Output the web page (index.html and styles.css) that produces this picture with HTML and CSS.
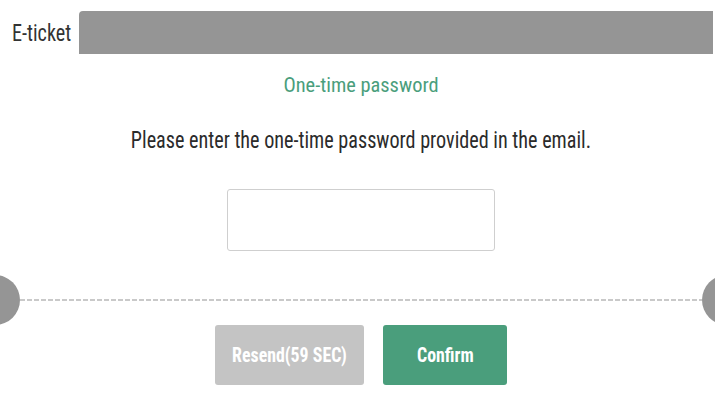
FILE: index.html
```html
<!DOCTYPE html>
<html lang="en">
<head>
<meta charset="utf-8">
<title>E-ticket</title>
<link rel="stylesheet" href="styles.css">
</head>
<body>
<div class="page">
  <div class="tabbar">
    <div class="tab"><span class="narrow narrow-left">E-ticket</span></div>
    <div class="tab-rest"></div>
  </div>
  <div class="content">
    <h1 class="title">One-time password</h1>
    <p class="lead"><span class="narrow">Please enter the one-time password provided in the email.</span></p>
    <div class="field-row">
      <input class="otp" type="text" aria-label="One-time password">
    </div>
  </div>
  <div class="divider">
    <span class="notch notch-left"></span>
    <span class="dash"></span>
    <span class="notch notch-right"></span>
  </div>
  <div class="actions">
    <button class="btn btn-resend" type="button"><span class="narrow">Resend(59 SEC)</span></button>
    <button class="btn btn-confirm" type="button"><span class="narrow">Confirm</span></button>
  </div>
</div>
</body>
</html>
```

FILE: styles.css
```css
* { box-sizing: border-box; }

html, body {
  margin: 0;
  padding: 0;
  background: #fff;
}

body {
  font-family: "Roboto Condensed", Roboto, "Liberation Sans", sans-serif;
  color: #333;
  overflow: hidden;
}

/* tall, tightly set labels */
.narrow {
  display: inline-block;
  white-space: nowrap;
  transform: scaleX(0.84);
  transform-origin: center;
}

.narrow-left { transform-origin: left center; }

.page {
  width: 715px;
  height: 402px;
  padding-top: 11px;
  display: flex;
  flex-direction: column;
  overflow: hidden;
}

.tabbar {
  display: flex;
  height: 43px;
  padding-right: 2px;
}

.tab {
  flex: none;
  width: 79px;
  padding-left: 12px;
  display: flex;
  align-items: center;
  font-size: 24px;
  color: #333;
  background: #fff;
}

.tab-rest {
  flex: 1;
  background: #959595;
  border-top-left-radius: 4px;
}

.content {
  padding-left: 7px;
}

.title {
  margin: 19px 0 0;
  text-align: center;
  font-weight: 400;
  font-size: 20.4px;
  line-height: 24px;
  color: #4a9e7c;
}

.lead {
  margin: 29px 0 0;
  text-align: center;
  font-size: 24px;
  line-height: 28px;
  color: #2b2b2b;
}

.field-row {
  margin-top: 35px;
  display: flex;
  justify-content: center;
}

.otp {
  width: 268px;
  height: 62px;
  border: 1px solid #cfcfcf;
  border-radius: 3px;
  background: #fff;
  outline: none;
}

.divider {
  margin-top: 24px;
  height: 50px;
  display: flex;
  align-items: center;
}

.notch {
  width: 50px;
  height: 50px;
  border-radius: 50%;
  background: #959595;
  flex: none;
}

.notch-left { margin-left: -30px; }
.notch-right { margin-right: -37px; }

.dash {
  flex: 1;
  height: 2px;
  background-image: linear-gradient(to right, #c9c9c9 0 5px, transparent 5px 7px);
  background-size: 7px 2px;
  background-repeat: repeat-x;
}

.actions {
  display: flex;
  justify-content: center;
  gap: 19px;
  padding-left: 7px;
}

.btn {
  height: 60px;
  padding: 0;
  border: none;
  border-radius: 3px;
  font-family: "Roboto Condensed", Roboto, "Liberation Sans", sans-serif;
  font-weight: 700;
  font-size: 21px;
  color: #fff;
}

.btn .narrow { transform: scaleX(0.85); }

.btn-resend {
  width: 149px;
  background: #c4c4c4;
}

.btn-confirm {
  width: 124px;
  background: #4a9e7c;
}
```
